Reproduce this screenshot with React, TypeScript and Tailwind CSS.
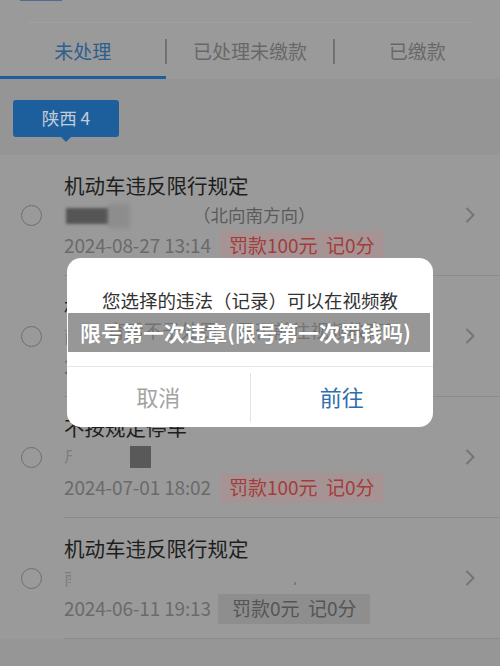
import React from "react";

const font = { fontFamily: '"Noto Sans CJK SC", "Noto Sans", sans-serif' };

type Item = {
  title: string;
  date: string;
  fine: string;
  red: boolean;
  sub: React.ReactNode;
};

const items: Item[] = [
  {
    title: "机动车违反限行规定",
    date: "2024-08-27 13:14",
    fine: "罚款100元  记0分",
    red: true,
    sub: (
      <div className="flex items-center">
        <div className="relative h-[22px] w-[68px]">
          <div className="absolute left-[2px] top-[4px] h-[16px] w-[44px] bg-[#555] blur-[1.5px]" />
          <div className="absolute left-[44px] top-[0px] h-[24px] w-[22px] bg-[#8d8d8d] blur-[2px]" />
        </div>
        <span className="ml-[61px] text-[17.5px] text-[#5a5a5a]">（北向南方向）</span>
      </div>
    ),
  },
  {
    title: "机动车违反限行规定",
    date: "2024-07-12 08:41",
    fine: "罚款100元  记0分",
    red: true,
    sub: <span className="text-[17px] text-[#7a7a7a]">南</span>,
  },
  {
    title: "不按规定停车",
    date: "2024-07-01 18:02",
    fine: "罚款100元  记0分",
    red: true,
    sub: (
      <div className="flex items-center">
        <span className="w-[66px] overflow-hidden text-[17px] text-[#7e7e7e]">
          <span className="inline-block w-[8px] overflow-hidden">户</span>
        </span>
        <div className="h-[22px] w-[21px] bg-[#595959]" />
      </div>
    ),
  },
  {
    title: "机动车违反限行规定",
    date: "2024-06-11 19:13",
    fine: "罚款0元  记0分",
    red: false,
    sub: (
      <div className="flex items-center">
        <span className="inline-block w-[7px] overflow-hidden text-[17px] text-[#7e7e7e]">南</span>
        <span className="ml-[223px] mt-[10px] h-[3px] w-[2px] bg-[#7a7a7a]" />
      </div>
    ),
  },
];

function Chevron() {
  return (
    <svg width="12" height="16" viewBox="0 0 12 16" fill="none">
      <polyline points="3,1.5 9.5,8 3,14.5" stroke="#757575" strokeWidth="2" strokeLinecap="round" strokeLinejoin="round" />
    </svg>
  );
}

function Row({ item }: { item: Item }) {
  return (
    <div className="flex h-[121px] bg-[#9a9a9a]">
      <div className="flex w-[64px] items-center justify-center pr-[2px]">
        <div className="h-[21px] w-[21px] rounded-full border-[1.5px] border-[#6e6e6e]" />
      </div>
      <div className="flex flex-1 border-b border-[#8b8b8b]">
        <div className="flex flex-1 flex-col pt-[15px]">
          <div className="flex h-[30px] items-center text-[20.5px] text-[#1e1e1e]">{item.title}</div>
          <div className="flex h-[30px] items-center">{item.sub}</div>
          <div className="flex h-[31px] items-center">
            <span className="text-[19px] tracking-[-0.15px] text-[#6a6a6a]">{item.date}</span>
            <span
              className={
                item.red
                  ? "ml-[9px] flex h-[30px] items-center whitespace-pre bg-[#a69494] px-[9px] text-[19px] text-[#a33c3c]"
                  : "ml-[7px] flex h-[30px] items-center whitespace-pre bg-[#8e8e8e] px-[14px] text-[19px] text-[#555]"
              }
            >
              {item.fine}
            </span>
          </div>
        </div>
        <div className="flex w-[36px] items-center justify-start">
          <Chevron />
        </div>
      </div>
    </div>
  );
}

export default function App() {
  return (
    <div className="relative h-[666px] w-[500px] overflow-hidden bg-[#969696]" style={font}>
      {/* tabs */}
      <div className="relative h-[79px] bg-[#9a9a9a]">
        <div className="absolute left-[20px] top-0 h-[1px] w-[42px] bg-[#4d6d92]" />
        <div className="absolute left-[27px] right-[27px] top-[22px] h-[1px] bg-[#a0a0a0]" />
        <div className="flex h-full pt-[34px]">
          <div className="relative flex h-[34px] flex-1 items-center justify-center text-[19px] text-[#2c5f8f]">
            未处理
          </div>
          <div className="mt-[5px] h-[25px] w-[2px] self-start bg-[#717171]" />
          <div className="flex h-[34px] flex-1 items-center justify-center text-[19px] text-[#686868]">
            已处理未缴款
          </div>
          <div className="mt-[5px] h-[25px] w-[2px] self-start bg-[#717171]" />
          <div className="flex h-[34px] flex-1 items-center justify-center text-[19px] text-[#686868]">
            已缴款
          </div>
        </div>
        <div className="absolute bottom-0 left-0 h-[3px] w-[166px] bg-[#1f5e9b]" />
      </div>

      {/* province */}
      <div className="h-[76px] bg-[#959595] pl-[13px] pt-[21px]">
        <div className="relative flex h-[37px] w-[106px] items-center justify-center rounded-[3px] bg-[#1d5f9d] text-[17.5px] text-[#c3ccd6]">
          陕西 4
          <div className="absolute -bottom-[5px] left-[48px] h-0 w-0 border-x-[5px] border-t-[5px] border-x-transparent border-t-[#1d5f9d]" />
        </div>
      </div>

      {/* list */}
      <div>
        {items.map((it, i) => (
          <Row key={i} item={it} />
        ))}
      </div>

      {/* dialog */}
      <div className="absolute left-[67px] top-[258px] flex h-[169px] w-[366px] flex-col rounded-[14px] bg-white">
        <div className="flex h-[109px] flex-col items-center border-b border-[#e6e6e6] pt-[27px] text-[18.5px] leading-[30px] text-[#333]">
          <div className="whitespace-nowrap">您选择的违法（记录）可以在视频教</div>
          <div className="whitespace-nowrap">育后不予处罚，是否前往视频教育?</div>
        </div>
        <div className="flex flex-1 items-stretch">
          <div className="flex flex-1 items-center justify-center pb-[1px] text-[22px] text-[#a3a3a3]">取消</div>
          <div className="mb-[5px] mt-[6px] w-[1px] bg-[#e3e3e3]" />
          <div className="flex flex-1 items-center justify-center pb-[1px] text-[22px] text-[#2f6dab]">前往</div>
        </div>
      </div>

      {/* caption banner */}
      <div className="absolute left-[68px] top-[313px] flex h-[39px] w-[362px] items-center bg-[rgba(128,128,128,0.82)] pl-[12px]">
        <span className="whitespace-nowrap text-[21px] font-bold text-white [text-shadow:0_0_1px_rgba(0,0,0,0.3)]">
          限号第一次违章(限号第一次罚钱吗)
        </span>
      </div>
    </div>
  );
}
